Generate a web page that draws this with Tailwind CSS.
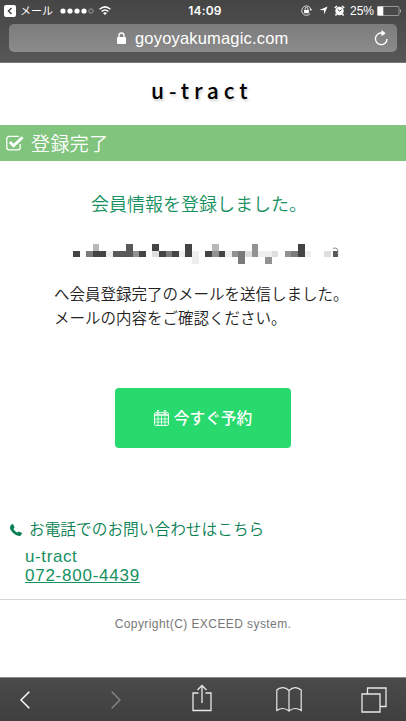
<!DOCTYPE html>
<html lang="ja">
<head>
<meta charset="utf-8">
<meta name="viewport" content="width=device-width, initial-scale=1">
<title>u-tract</title>
<script src="https://cdn.jsdelivr.net/npm/@tailwindcss/browser@4"></script>
</head>
<body class="h-[721px] w-[406px] overflow-hidden bg-white font-['Liberation_Sans','Noto_Sans_CJK_JP',sans-serif]">
<div class="flex h-full flex-col">
  <header class="h-[63px] shrink-0 border-b border-[#777] bg-linear-to-b from-[#454545] to-[#575757] text-white">
    <div class="grid h-[24px] grid-cols-3 items-center pr-[7px] pl-1 text-[13px] leading-none">
      <div class="flex items-center pb-[3px]">
        <svg class="mr-[4px] size-3" viewBox="0 0 12 12"><rect width="12" height="12" rx="2" fill="#fff"/><path d="M7.5 3 4.5 6l3 3" fill="none" stroke="#444" stroke-width="1.5"/></svg>
        <span class="mr-2 w-8 font-['Noto_Sans_CJK_JP',sans-serif] text-[11px] whitespace-nowrap">メール</span>
        <svg class="mr-[5px] h-[6px] w-[34px]" viewBox="0 0 34 6" fill="#fff"><circle cx="3" cy="3" r="2.6"/><circle cx="10" cy="3" r="2.6"/><circle cx="17" cy="3" r="2.6"/><circle cx="24" cy="3" r="2.6"/><circle cx="31" cy="3" r="2.2" fill="none" stroke="#ccc" stroke-width=".6"/></svg>
        <svg class="h-[9px] w-3" viewBox="0 0 12 9" fill="none" stroke="#fff" stroke-width="1.5"><path d="M.6 3.3Q6-1.5 11.4 3.3M2.6 5.5Q6 2.6 9.4 5.5"/><path d="M4 7Q6 5.4 8 7L6 9z" fill="#fff" stroke="none"/></svg>
      </div>
      <div class="pb-[3px] pl-[7px] text-center font-['Inter','Liberation_Sans',sans-serif] text-[12px] font-semibold tracking-[.2px] whitespace-nowrap">14:09</div>
      <div class="flex items-center justify-end pb-[3px]">
        <svg class="mr-[7px] size-[11px]" viewBox="0 0 11 11" fill="none" stroke="#fff"><path d="M9.2 8.5A4.7 4.7 0 1 1 10 4.4" stroke-width=".8"/><path d="M8.4 4.2h2.6L9.8 6z" fill="#fff" stroke="none"/><path d="M3.1 5h4.8v3.2H3.1z" fill="#fff" stroke="none"/><path d="M4.1 5V3.8a1.4 1.4 0 0 1 2.8 0V5" stroke-width=".8"/></svg>
        <svg class="mr-[6px] size-[9px]" viewBox="0 0 9 9"><path d="M8.6.4 5 8.6V4.2L.4 4z" fill="#fff"/></svg>
        <svg class="mr-[5px] size-[11px]" viewBox="0 0 11 11"><circle cx="5.5" cy="6" r="4.2" fill="#fff"/><path d="M.8 3 3 1M8 1l2.200 2M2.500 9l-1 1.500M8.500 9l1 1.500" stroke="#fff" stroke-width="1.600"/><path d="M3.700 4.300 5.700 6.200 7.600 4.600" fill="none" stroke="#444"/></svg>
        <span class="mr-[3px] text-[12px]">25%</span>
        <svg class="-mr-[3px] h-[10px] w-[25px] shrink-0" viewBox="0 0 25 10"><rect x=".5" y=".5" width="21.500" height="9" rx="1" fill="none" stroke="#999"/><path d="M.5.5h5.800v9H.5z" fill="#fff"/><path d="M23 3q1.500 2 0 4z" fill="#fff"/></svg>
      </div>
    </div>
    <div class="mx-[9px] flex h-[28px] items-center rounded-[5px] bg-linear-to-b from-[#7c7c7c] to-[#8b8b8b] pr-[8px] pl-[108px]">
      <svg class="mr-[9px] h-[12px] w-[9px]" viewBox="0 0 9 12"><rect y="5" width="9" height="7" rx="1" fill="#fff"/><path d="M2 5.500V3.500a2.500 2.500 0 0 1 5 0v2" fill="none" stroke="#fff" stroke-width="1.300"/></svg>
      <span class="text-[16.500px] leading-none tracking-[.18px] whitespace-nowrap">goyoyakumagic.com</span>
      <svg class="ml-auto h-[16px] w-[15px]" viewBox="0 0 15 16" fill="none" stroke="#fff" stroke-width="1.400"><path d="M8.500 3.200A5.800 5.800 0 1 0 13 9"/><path d="M7.500 0l4.200 3.300-4.200 3z" fill="#fff" stroke="none"/></svg>
    </div>
  </header>

  <main class="flex flex-1 flex-col">
    <h1 class="flex h-[62px] items-center pb-[8px] pl-[151px] font-['Noto_Sans_CJK_JP',sans-serif] text-[21px] leading-none font-medium tracking-[4.900px] text-black [text-shadow:1px_2px_3px_#ccc]">u-tract</h1>
    <h2 class="flex h-[36px] items-center bg-[#80c47d] pl-[6px] text-[19px] leading-none text-white">
      <svg class="mr-[7px] h-[16px] w-[18px]" viewBox="0 0 18 16" fill="none" stroke="#fff"><path d="M14.200 9v3.500a2.400 2.400 0 0 1-2.400 2.400H3.200A2.400 2.400 0 0 1 .8 12.500V3.700A2.400 2.400 0 0 1 3.200 1.300h8.600q.7 0 1.200.3" stroke-width="1.300"/><path d="m3.800 7 3.800 3.800 9-8.500" stroke-width="2.900"/></svg>
      <span class="pb-[2px] font-['Noto_Sans_CJK_JP',sans-serif] font-[350] tracking-[.4px]">登録完了</span>
    </h2>
    <p class="mt-[32px] ml-[91px] h-[20px] font-['Noto_Sans_CJK_JP',sans-serif] text-[18px] leading-[20px] font-[350] whitespace-nowrap text-[#159060]">会員情報を登録しました。</p>
    <svg class="mt-[31px] ml-[72.700px] h-[20px] w-[268px]" viewBox="0 0 40.5 3" preserveAspectRatio="none" shape-rendering="crispEdges">
      <path fill="#444" d="M0 1h1v1H0zM3 1h2v1H3zM10 1h1v1h-1zM12 0h1v1h-1zM13 1h1v1h-1zM15 1h1v1h-1zM17 0h1v2h-1zM20 1h1v1h-1zM22 1h1v1h-1zM34 0h1v2h-1z"/>
      <path fill="#595959" d="M6 1h3v1H6zM8 0h1v1H8zM39.300 1h.7v1h-.7z"/>
      <path fill="#7b7b7b" d="M2 1h1v1H2zM14 1h1v1h-1zM25 1h1v2h-1zM33 1h1v1h-1z"/>
      <path fill="#929292" d="M9 1h1v1H9zM21 1h1v1h-1zM24 1h1v1h-1zM27 0h1v2h-1zM29 2h1v1h-1zM32 1h1v1h-1z"/>
      <path fill="#b8b8b8" d="M3 0h1v1H3zM21 0h1v1h-1z"/>
      <path fill="#dedede" d="M12 1h1v1h-1zM26 1h1v1h-1zM30 1h1v1h-1zM38 1h1v1h-1z"/>
      <path fill="#eee" d="M5 1h1v1H5zM16 1h1v1h-1zM18 1h1v2h-1zM23 1h1v1h-1zM28 1h2v1h-2zM35 1h1v1h-1z"/>
      <path fill="none" stroke="#888" stroke-width=".15" shape-rendering="auto" d="M39.300 .65Q40.200 .4 40 1.500"/>
    </svg>
    <p class="mt-[17px] ml-[54px] h-[50px] font-['Noto_Sans_CJK_JP',sans-serif] text-[15.500px] leading-[24px] font-[350] whitespace-nowrap text-[#222]">へ会員登録完了のメールを送信しました。<br>メールの内容をご確認ください。</p>
    <a class="mt-[57px] ml-[115px] flex h-[60px] w-[176px] items-center justify-center rounded-[4px] bg-[#28d96d] font-['Noto_Sans_CJK_JP',sans-serif] text-[15.700px] leading-none font-medium text-white">
      <svg class="mr-[5px] h-[16px] w-[15px]" viewBox="0 0 15 16" fill="none" stroke="#fff"><rect x=".6" y="2.700" width="13.800" height="12.700" rx="1"/><path d="M1 5h13" stroke-width="1.500"/><path d="M4 6v9M7.500 6v9M11 6v9M1 9h13M1 12h13" stroke-width=".8"/><path d="M4 1.300v2.200M11 1.300v2.200" stroke-width="2.400" stroke-linecap="round"/><path d="M4 1v2.500M11 1v2.500" stroke="#28d96d" stroke-width=".7"/></svg>
      <span>今すぐ予約</span>
    </a>
    <div class="mt-[72px] flex h-[20px] items-center pl-[10px] text-[#098052]">
      <svg class="mr-[7px] size-[12px]" viewBox="0 0 12 12"><path d="M2.600.1Q3 .1 3.300.8L4.500 3.100Q4.700 3.600 4 4.200T3.400 5.100Q4.700 7.500 7 8.600 7.300 8.700 7.900 8T8.900 7.500L11.500 8.800Q12 9 11.800 9.700 11.300 12 8.900 11.900 5.700 11.800 2.600 8.600T.1 3.100Q0 .8 2.600.1z" fill="currentColor"/></svg>
      <span class="pb-[2px] font-['Noto_Sans_CJK_JP',sans-serif] text-[15.700px] leading-none font-[350] whitespace-nowrap">お電話でのお問い合わせはこちら</span>
    </div>
    <div class="mt-[7px] ml-[25px] text-[17px] leading-[19px] text-[#159060]">
      <div class="tracking-[.6px]">u-tract</div>
      <a class="tracking-[.75px] underline decoration-1">072-800-4439</a>
    </div>
    <footer class="mt-[14px] flex-1 border-t border-[#d5d5d5] pt-[16px] text-center text-[12px] leading-[16px] tracking-[.42px] text-[#777]">Copyright(C) EXCEED system.</footer>
  </main>

  <nav class="flex h-[44px] shrink-0 items-center border-t border-[#8c8c8c] bg-linear-to-b from-[#4a4a4a] to-[#3f3f3f] pl-[20px] text-white">
    <svg class="mr-[81px] h-[18px] w-[10px]" viewBox="0 0 10 18" fill="none" stroke="#fff" stroke-width="1.500"><path d="M9.300.7 1 9l8.300 8.300"/></svg>
    <svg class="mr-[71px] h-[18px] w-[10px]" viewBox="0 0 10 18" fill="none" stroke="#858585" stroke-width="1.500"><path d="M.7.7 9 9 .7 17.300"/></svg>
    <svg class="-mt-[3px] mr-[64px] h-[28px] w-[20px]" viewBox="0 0 20 28" fill="none" stroke="#e8e8e8" stroke-width="1.300"><path d="M6.500 9H1v17.500h18V9h-5.500M10 19V1.500M5.500 6 10 1.500 14.500 6"/></svg>
    <svg class="mr-[59px] h-[25px] w-[26px]" viewBox="0 0 26 25" fill="none" stroke="#e8e8e8" stroke-width="1.200"><path d="M13 3.500Q10 .5 6.500.7T.8 3v20.500q3-2 6-2t6.200 2.500q3-2.500 6.200-2.500t6 2V3Q22.500.9 19.500.7T13 3.500V24"/></svg>
    <svg class="size-[26px]" viewBox="0 0 26 26" fill="none" stroke="#e8e8e8" stroke-width="1.300"><path d="M1 7h18v18H1zM6.500 7V1H25v18.500h-6"/></svg>
  </nav>
</div>
</body>
</html>
